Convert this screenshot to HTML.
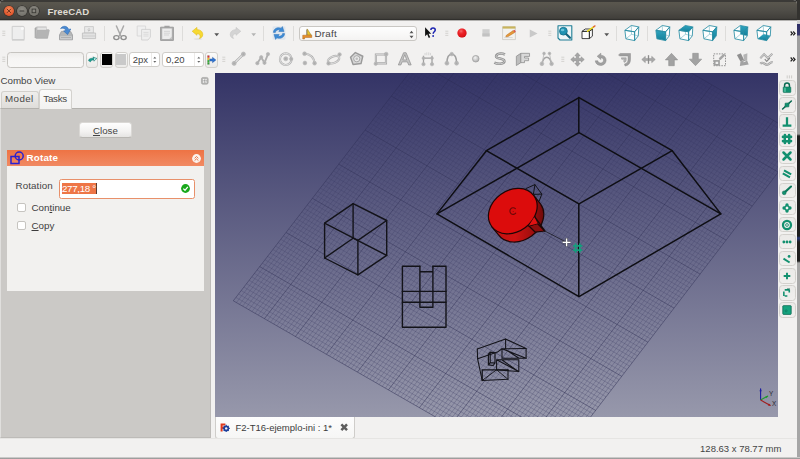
<!DOCTYPE html>
<html lang="en">
<head>
<meta charset="utf-8">
<title>FreeCAD</title>
<style>
*{box-sizing:border-box;margin:0;padding:0}
html,body{width:800px;height:459px;overflow:hidden;background:#2b2a28}
body{position:relative;font-family:"Liberation Sans",sans-serif;font-size:9.7px;color:#3c3c3c;line-height:1}
#win,#win *{position:absolute}
#win u{position:static}
#win svg *{position:static}
#win{position:absolute;left:0;top:0;width:797px;height:457px;background:#f2f1f0;overflow:hidden;border-radius:4px 4px 0 0}
#title{left:0;top:0;width:797px;height:21px;background:linear-gradient(#3b3a37 0,#3b3a37 1.5px,#5a574e 2.2px,#504e48 10px,#413f3b 18.4px,#302f2c 19.2px,#33322f 20px,#b3b2b0 20px,#b3b2b0 21px);border-radius:3px 3px 0 0}
#title .t{left:47.5px;top:6.7px;color:#dfdbd2;font-weight:bold;font-size:9.6px;letter-spacing:.1px}
.wb{width:9.8px;height:9.8px;border-radius:50%;top:6.4px}
#tb1{left:0;top:20px;width:797px;height:26px}
#tb2{left:0;top:46px;width:797px;height:27px}
#panel{left:0;top:73px;width:215px;height:365px}
#view{left:215px;top:73px;width:563px;height:344px;background:linear-gradient(#343466 0,#9798ab 100%);overflow:hidden}
#rtb{left:778px;top:73px;width:19px;height:344px}
#btab{left:215px;top:417px;width:582px;height:21px}
#status{left:0;top:438px;width:797px;height:20px;border-top:1px solid #e6e5e3}
svg{position:absolute;left:0;top:0;overflow:visible}
.cb{width:9px;height:9px;border:1px solid #c6c4c0;border-radius:2px;background:#fff}
.rb{left:1px;width:16.5px;height:15.5px;border-radius:3.5px}
.rb.on{border:1px solid #d3d1cd;background:linear-gradient(#ebeae8,#f0efed)}
.tbtn{border:1px solid #d2d0cc;border-radius:3px;background:linear-gradient(#fbfbfa,#ebeae8)}
.spin{border:1px solid #cfcdc9;border-radius:3px;background:#fff}

</style>
</head>
<body>
<div id="edge" style="position:absolute;left:797px;top:0;width:3px;height:459px;background:linear-gradient(#33322f 0,#33322f 20px,#cfcfcf 20.5px,#cfcfcf 24px,#2c2c66 24.5px,#3a3a6a 35px,#9e9e9e 36px,#9e9e9e 134px,#1e1e1e 136px,#1e1e1e 236px,#2a3a7a 238px,#1e1e1e 242px,#1e1e1e 261px,#a6a6a6 263px,#a6a6a6 459px)"></div>
<div id="bot" style="position:absolute;left:0;top:457px;width:800px;height:2px;background:linear-gradient(#e6e5e4,#a2a2a1 60%,#969695)"></div>
<div id="win" class="abs">
<div id="title"><div class="abs">
<div class="wb" style="left:4.4px;background:radial-gradient(circle at 50% 35%,#f28a5b,#e0542a 70%,#b8421f);box-shadow:0 0 0 .6px #3a2a22"><svg width="9.8" height="9.8" viewBox="0 0 10.5 10.5"><path d="M3.4 3.4L7.1 7.1M7.1 3.4L3.4 7.1" stroke="#6a2c16" stroke-width="1" stroke-linecap="round"/></svg></div>
<div class="wb" style="left:16.9px;background:radial-gradient(circle at 50% 35%,#8d8b84,#76746d 70%,#5c5a55);box-shadow:0 0 0 .6px #2c2b28"><svg width="9.8" height="9.8" viewBox="0 0 10.5 10.5"><path d="M3.1 5.3H7.4" stroke="#3c3b37" stroke-width="1.1" stroke-linecap="round"/></svg></div>
<div class="wb" style="left:29.4px;background:radial-gradient(circle at 50% 35%,#8d8b84,#76746d 70%,#5c5a55);box-shadow:0 0 0 .6px #2c2b28"><svg width="9.8" height="9.8" viewBox="0 0 10.5 10.5"><rect x="3.3" y="3.3" width="3.9" height="3.9" fill="none" stroke="#3c3b37" stroke-width="1"/></svg></div>
<span class="t">FreeCAD</span>
</div>
</div>
<div id="tb1" class="abs"><svg width="0" height="0" style="position:absolute"><defs><radialGradient id="recg" cx=".4" cy=".3" r=".7"><stop offset="0" stop-color="#ff8a8a" stop-opacity=".75"/><stop offset=".5" stop-color="#f04040" stop-opacity=".2"/><stop offset="1" stop-color="#a00000" stop-opacity=".35"/></radialGradient><radialGradient id="ndg" cx=".5" cy=".5" r=".6"><stop offset="0" stop-color="#a6a6a6"/><stop offset=".6" stop-color="#bcbcbc"/><stop offset="1" stop-color="#d8d8d8"/></radialGradient><linearGradient id="cbg" x1="0" y1="0" x2="0" y2="1"><stop offset="0" stop-color="#2fa4bf"/><stop offset="1" stop-color="#12809a"/></linearGradient><radialGradient id="ptg" cx=".4" cy=".35" r=".7"><stop offset="0" stop-color="#f4f4f4"/><stop offset="1" stop-color="#a8a8a8"/></radialGradient></defs></svg><svg style="left:2.0px;top:10.0px" width="4" height="7" viewBox="0 0 4 7"><path d="M.3 1.2H3.3M.3 3.3H3.3M.3 5.4H3.3" stroke="#d0cfcc" stroke-width=".9"/></svg>
<svg style="left:10.2px;top:5.3px" width="16" height="16" viewBox="0 0 16 16"><path d="M2.2 1.4H13.2Q14.2 1.4 14.2 2.4V14.6H2.2Z" fill="#eeeeee" stroke="#cbcbcb" stroke-width=".9"/><circle cx="12.3" cy="3.4" r="1.5" fill="#fafafa"/><path d="M2 15.2H14.4" stroke="#c9c9c9" stroke-width=".8"/></svg>
<svg style="left:34.2px;top:5.3px" width="16" height="16" viewBox="0 0 16 16"><path d="M1 2.5L3 1.6H12.6V4.2H15L13.6 13.4H1.6Z" fill="#bcbcbc"/><path d="M3.4 2.4H12.2V5H3.4Z" fill="#e4e4e4"/><path d="M2.2 13.2L3.6 5.2H15.4L13.6 13.2Z" fill="#b4b4b4" stroke="#acacac" stroke-width=".5"/><path d="M1.2 3V13" stroke="#9a9a9a" stroke-width=".9"/></svg>
<svg style="left:57.6px;top:5.3px" width="16" height="16" viewBox="0 0 16 16"><path d="M1.5 10L3.4 6.4H12.6L14.5 10V14.8H1.5Z" fill="#b4b6b7" stroke="#999b9d" stroke-width=".8"/><path d="M2.2 11.2H13.8V14.2H2.2Z" fill="#cfd0d1"/><path d="M3 12.6H13" stroke="#a0a2a3" stroke-width=".8"/><path d="M2.6 3.6C4.4 .4 9.4 .4 10.6 4.4L12.8 4L9.6 9.6L5.6 6L8 5.4C7 3.2 4.6 2.6 2.6 3.6Z" fill="#4a8ad2" stroke="#2f6cb4" stroke-width=".6"/></svg>
<svg style="left:81.2px;top:5.3px" width="16" height="16" viewBox="0 0 16 16"><path d="M3.6 1.6H12.4V8H3.6Z" fill="#e9e9e9" stroke="#c4c4c4" stroke-width=".8"/><path d="M8 3V6M6.6 4.8L8 6.2L9.4 4.8" stroke="#bdbdbd" stroke-width=".9" fill="none"/><path d="M1.4 8H14.6V13.6H1.4Z" fill="#e2e2e2" stroke="#bdbdbd" stroke-width=".8"/><path d="M2 11H14" stroke="#c8c8c8" stroke-width=".8"/></svg>
<div style="left:104.0px;top:5.8px;width:1px;height:15px;background:#dddcda"></div>
<svg style="left:112.0px;top:5.3px" width="16" height="16" viewBox="0 0 16 16"><path d="M4.4 1L8.6 10.5M11.6 1L7.4 10.5" stroke="#a9a9a9" stroke-width="1.5" stroke-linecap="round" fill="none"/><ellipse cx="4.4" cy="12.6" rx="2.6" ry="2" fill="none" stroke="#8f8f8f" stroke-width="1.4"/><ellipse cx="11.6" cy="12.6" rx="2.6" ry="2" fill="none" stroke="#8f8f8f" stroke-width="1.4"/></svg>
<svg style="left:135.6px;top:5.3px" width="16" height="16" viewBox="0 0 16 16"><path d="M1.2 1H9.6V11H1.2Z" fill="#f0f0f0" stroke="#d4d4d4" stroke-width=".8"/><path d="M5.6 4.4H14.4V12L12 15H5.6Z" fill="#efefef" stroke="#cdcdcd" stroke-width=".8"/><path d="M7.4 7.4H12.6M7.4 9.2H12.6M7.4 11H12.6" stroke="#d8d8d8" stroke-width=".9"/></svg>
<svg style="left:159.2px;top:5.3px" width="16" height="16" viewBox="0 0 16 16"><path d="M1.6 2.2H14.4V15.4H1.6Z" fill="#b1b1b1" stroke="#999" stroke-width=".9"/><path d="M3.2 3.6H12.8V14H3.2Z" fill="#ececec"/><path d="M5.4 .8H10.6V3H5.4Z" fill="#a2a2a2"/><path d="M5 6.4H11M5 8.2H11M5 10H10" stroke="#d2d2d2" stroke-width=".9"/><path d="M12.8 11.6V14H10.4Z" fill="#c2c2c2"/></svg>
<div style="left:182.0px;top:5.8px;width:1px;height:15px;background:#dddcda"></div>
<svg style="left:190.6px;top:5.9px" width="14" height="14" viewBox="0 0 16 16"><path d="M1.4 6L6.8 1.6V4.2C11 4.2 13.6 6.6 13.4 10.2C13.2 12.4 11.6 13.8 9.6 14.2C11.2 12.6 11 9.2 6.8 8.6V10.6Z" fill="#f7d932" stroke="#e2bd14" stroke-width=".7" stroke-linejoin="round"/><ellipse cx="8" cy="14.8" rx="5" ry=".9" fill="#000" opacity=".08"/></svg>
<svg style="left:213.8px;top:12.6px" width="5.4" height="3.4" viewBox="0 0 6 4"><path d="M.2 .3H5.8L3 3.7Z" fill="#555"/></svg>
<svg style="left:227.6px;top:5.9px" width="14" height="14" viewBox="0 0 16 16"><path d="M14.6 6L9.2 1.6V4.2C5 4.2 2.4 6.6 2.6 10.2C2.8 12.4 4.4 13.8 6.4 14.2C4.8 12.6 5 9.2 9.2 8.6V10.6Z" fill="#d4d4d4" stroke="#c6c6c6" stroke-width=".7" stroke-linejoin="round"/></svg>
<svg style="left:250.8px;top:12.6px" width="5.4" height="3.4" viewBox="0 0 6 4"><path d="M.2 .3H5.8L3 3.7Z" fill="#b4b4b4"/></svg>
<div style="left:262.7px;top:5.8px;width:1px;height:15px;background:#dddcda"></div>
<svg style="left:270.8px;top:5.3px" width="16" height="16" viewBox="0 0 16 16"><path d="M1.6 2.4Q1.6 1.2 2.8 1.2H13.2Q14.4 1.2 14.4 2.4V13.6Q14.4 14.8 13.2 14.8H2.8Q1.6 14.8 1.6 13.6Z" fill="#4f98dc" opacity=".12"/><path d="M2.4 7.4C2.6 3.8 6.4 1.6 10.2 3.2L11.4 1.6L13 6.6L7.8 6.4L9 4.8C6.6 4.4 4.6 5.4 4.4 7.4Z" fill="#3d8bd6" stroke="#2f73b8" stroke-width=".5"/><path d="M13.6 8.6C13.4 12.2 9.6 14.4 5.8 12.8L4.6 14.4L3 9.4L8.2 9.6L7 11.2C9.4 11.6 11.4 10.6 11.6 8.6Z" fill="#3d8bd6" stroke="#2f73b8" stroke-width=".5"/></svg>
<div style="left:293.1px;top:5.8px;width:1px;height:15px;background:#dddcda"></div>
<div id="wbsel" style="left:298.5px;top:5.5px;width:118.5px;height:15.5px;border:1px solid #c9c7c3;border-radius:3px;background:linear-gradient(#fefefe,#f4f3f2)"><svg style="left:2.5px;top:1.0px" width="12" height="12" viewBox="0 0 16 16"><path d="M7 1.2L12.4 9.6H7Z" fill="#e8c32c" stroke="#8a6d10" stroke-width=".6"/><path d="M6.2 2V10" stroke="#6c5a2a" stroke-width=".8"/><path d="M1 9.6H13V12.6H3.4V14.6H1Z" fill="#e8902c" stroke="#a65c12" stroke-width=".6"/></svg><span style="left:15px;top:2.6px;font-size:9.8px;letter-spacing:.25px;color:#444">Draft</span><svg style="left:109.5px;top:3.2px" width="5" height="9" viewBox="0 0 5 9"><path d="M.5 3.2L2.5 .8L4.5 3.2ZM.5 5.8L2.5 8.2L4.5 5.8Z" fill="#555"/></svg></div>
<svg style="left:422.6px;top:6.3px" width="14" height="14" viewBox="0 0 16 16"><path d="M2.4 1.4V11.6L4.8 9.4L6.6 13.6L8.2 12.8L6.4 8.8H9.4Z" fill="#111"/><path d="M9 4.6C9 1.6 14 1.6 14 4.6C14 6.6 11.6 6.6 11.6 8.8" fill="none" stroke="#1a22b0" stroke-width="1.7"/><circle cx="11.6" cy="11.4" r="1.05" fill="#1a22b0"/></svg>
<svg style="left:445.0px;top:10.0px" width="4" height="7" viewBox="0 0 4 7"><path d="M.3 1.2H3.3M.3 3.3H3.3M.3 5.4H3.3" stroke="#d0cfcc" stroke-width=".9"/></svg>
<svg style="left:453.7px;top:5.1px" width="16" height="16" viewBox="0 0 16 16"><circle cx="8" cy="8" r="4.6" fill="#e8161c"/><circle cx="8" cy="8" r="4.6" fill="url(#recg)"/></svg>
<svg style="left:477.6px;top:5.3px" width="16" height="16" viewBox="0 0 16 16"><rect x="4.4" y="4.2" width="7.2" height="7.2" fill="#cfcfcf"/><rect x="4.4" y="8.4" width="7.2" height="3" fill="#c2c2c2"/></svg>
<svg style="left:501.4px;top:5.3px" width="16" height="16" viewBox="0 0 16 16"><path d="M1.6 1.8H14.4V14.6H1.6Z" fill="#f3f2ee" stroke="#c9c8c2" stroke-width=".8"/><path d="M1.6 1.4H14.4V3.6H1.6Z" fill="#c9b45c"/><path d="M3.2 12.6H11.6" stroke="#cfcfcf" stroke-width=".8"/><path d="M5.4 10.2L12.2 5.6L13.8 7.4L7 11.6L4.8 11.8Z" fill="#e79a3a" stroke="#b56a1a" stroke-width=".5"/><path d="M12.2 5.6L13.4 4.8L14.8 6.4L13.8 7.4Z" fill="#e0504a"/></svg>
<svg style="left:526.5px;top:7.0px" width="13" height="13" viewBox="0 0 16 16"><path d="M3.4 3.2L13 8L3.4 12.8Z" fill="#c9c9c9"/></svg>
<svg style="left:548.0px;top:10.0px" width="4" height="7" viewBox="0 0 4 7"><path d="M.3 1.2H3.3M.3 3.3H3.3M.3 5.4H3.3" stroke="#d0cfcc" stroke-width=".9"/></svg>
<svg style="left:556.6px;top:5.3px" width="16" height="16" viewBox="0 0 16 16"><path d="M1 .8H14.8V15H3L1 13Z" fill="#eef6f8" stroke="#217f96" stroke-width="1.1" stroke-linejoin="round"/><circle cx="6.4" cy="6.2" r="3.9" fill="#1f93b3" stroke="#16708c" stroke-width=".8"/><path d="M9.4 9.2L13 12.8" stroke="#15657e" stroke-width="2.2" stroke-linecap="round"/><ellipse cx="5.6" cy="5" rx="1.8" ry="1.2" fill="#7fd0e4" opacity=".8"/></svg>
<svg style="left:580.0px;top:4.9px" width="16" height="16" viewBox="0 0 16 16"><path d="M2 6.4L5.2 4H12.4L9.4 6.4Z M2 6.4H9.4V13.6H2Z M9.4 6.4L12.4 4V11.2L9.4 13.6Z" fill="#fbfbfb" stroke="#2e2e2e" stroke-width=".9" stroke-linejoin="round"/><path d="M7.6 6.2L14 1.6" stroke="#e8d81a" stroke-width="1.5" stroke-linecap="round"/><path d="M13.4 2L15 .9" stroke="#e0603a" stroke-width="1.3" stroke-linecap="round"/></svg>
<svg style="left:604.3px;top:12.6px" width="5.4" height="3.4" viewBox="0 0 6 4"><path d="M.2 .3H5.8L3 3.7Z" fill="#555"/></svg>
<div style="left:615.7px;top:5.8px;width:1px;height:15px;background:#dddcda"></div>
<svg style="left:624.2px;top:5.3px" width="16" height="16" viewBox="0 0 16 16"><path d="M0.9 5.3L7.3 0.5L14.8 1.9L14.3 10.8L10.6 15.6L1.9 13.8Z" fill="#fdfefe" stroke="none"/><path d="M7.3 0.5L7.5 9.3M7.5 9.3L1.9 13.8M7.5 9.3L14.3 10.8" fill="none" stroke="#2a8ea4" stroke-opacity=".55" stroke-width=".7" stroke-linejoin="round"/><path d="M0.9 5.3L10.6 6.8L10.6 15.6L1.9 13.8ZM0.9 5.3L7.3 0.5L14.8 1.9L10.6 6.8ZM10.6 6.8L14.8 1.9L14.3 10.8L10.6 15.6Z" fill="none" stroke="#2a8ea4" stroke-width=".85" stroke-linejoin="round"/></svg>
<div style="left:647.1px;top:5.8px;width:1px;height:15px;background:#dddcda"></div>
<svg style="left:654.8px;top:5.3px" width="16" height="16" viewBox="0 0 16 16"><path d="M0.9 5.3L7.3 0.5L14.8 1.9L14.3 10.8L10.6 15.6L1.9 13.8Z" fill="#fdfefe" stroke="none"/><path d="M0.9 5.3L10.6 6.8L10.6 15.6L1.9 13.8Z" fill="url(#cbg)" stroke="none"/><path d="M7.3 0.5L7.5 9.3M7.5 9.3L1.9 13.8M7.5 9.3L14.3 10.8" fill="none" stroke="#2a8ea4" stroke-opacity=".55" stroke-width=".7" stroke-linejoin="round"/><path d="M0.9 5.3L10.6 6.8L10.6 15.6L1.9 13.8ZM0.9 5.3L7.3 0.5L14.8 1.9L10.6 6.8ZM10.6 6.8L14.8 1.9L14.3 10.8L10.6 15.6Z" fill="none" stroke="#2a8ea4" stroke-width=".85" stroke-linejoin="round"/></svg>
<svg style="left:678.2px;top:5.3px" width="16" height="16" viewBox="0 0 16 16"><path d="M0.9 5.3L7.3 0.5L14.8 1.9L14.3 10.8L10.6 15.6L1.9 13.8Z" fill="#fdfefe" stroke="none"/><path d="M0.9 5.3L7.3 0.5L14.8 1.9L10.6 6.8Z" fill="url(#cbg)" stroke="none"/><path d="M7.3 0.5L7.5 9.3M7.5 9.3L1.9 13.8M7.5 9.3L14.3 10.8" fill="none" stroke="#2a8ea4" stroke-opacity=".55" stroke-width=".7" stroke-linejoin="round"/><path d="M0.9 5.3L10.6 6.8L10.6 15.6L1.9 13.8ZM0.9 5.3L7.3 0.5L14.8 1.9L10.6 6.8ZM10.6 6.8L14.8 1.9L14.3 10.8L10.6 15.6Z" fill="none" stroke="#2a8ea4" stroke-width=".85" stroke-linejoin="round"/></svg>
<svg style="left:702.0px;top:5.3px" width="16" height="16" viewBox="0 0 16 16"><path d="M0.9 5.3L7.3 0.5L14.8 1.9L14.3 10.8L10.6 15.6L1.9 13.8Z" fill="#fdfefe" stroke="none"/><path d="M10.6 6.8L14.8 1.9L14.3 10.8L10.6 15.6Z" fill="url(#cbg)" stroke="none"/><path d="M7.3 0.5L7.5 9.3M7.5 9.3L1.9 13.8M7.5 9.3L14.3 10.8" fill="none" stroke="#2a8ea4" stroke-opacity=".55" stroke-width=".7" stroke-linejoin="round"/><path d="M0.9 5.3L10.6 6.8L10.6 15.6L1.9 13.8ZM0.9 5.3L7.3 0.5L14.8 1.9L10.6 6.8ZM10.6 6.8L14.8 1.9L14.3 10.8L10.6 15.6Z" fill="none" stroke="#2a8ea4" stroke-width=".85" stroke-linejoin="round"/></svg>
<div style="left:724.9px;top:5.8px;width:1px;height:15px;background:#dddcda"></div>
<svg style="left:732.6px;top:5.3px" width="16" height="16" viewBox="0 0 16 16"><path d="M0.9 5.3L7.3 0.5L14.8 1.9L14.3 10.8L10.6 15.6L1.9 13.8Z" fill="#fdfefe" stroke="none"/><path d="M7.3 0.5L14.8 1.9L14.3 10.8L7.5 9.3Z" fill="url(#cbg)" stroke="none"/><path d="M7.3 0.5L7.5 9.3M7.5 9.3L1.9 13.8M7.5 9.3L14.3 10.8" fill="none" stroke="#2a8ea4" stroke-opacity=".55" stroke-width=".7" stroke-linejoin="round"/><path d="M0.9 5.3L10.6 6.8L10.6 15.6L1.9 13.8ZM0.9 5.3L7.3 0.5L14.8 1.9L10.6 6.8ZM10.6 6.8L14.8 1.9L14.3 10.8L10.6 15.6Z" fill="none" stroke="#2a8ea4" stroke-width=".85" stroke-linejoin="round"/></svg>
<svg style="left:756.4px;top:5.3px" width="16" height="16" viewBox="0 0 16 16"><path d="M0.9 5.3L7.3 0.5L14.8 1.9L14.3 10.8L10.6 15.6L1.9 13.8Z" fill="#fdfefe" stroke="none"/><path d="M1.9 13.8L10.6 15.6L14.3 10.8L7.5 9.3Z" fill="url(#cbg)" stroke="none"/><path d="M7.3 0.5L7.5 9.3M7.5 9.3L1.9 13.8M7.5 9.3L14.3 10.8" fill="none" stroke="#2a8ea4" stroke-opacity=".55" stroke-width=".7" stroke-linejoin="round"/><path d="M0.9 5.3L10.6 6.8L10.6 15.6L1.9 13.8ZM0.9 5.3L7.3 0.5L14.8 1.9L10.6 6.8ZM10.6 6.8L14.8 1.9L14.3 10.8L10.6 15.6Z" fill="none" stroke="#2a8ea4" stroke-width=".85" stroke-linejoin="round"/></svg>
<svg style="left:789.6px;top:10.9px" width="5.6" height="4.8" viewBox="0 0 7 6"><path d="M.8 .6L3 3L.8 5.4M4 .6L6.2 3L4 5.4" fill="none" stroke="#222" stroke-width="1.6"/></svg></div>
<div id="tb2" class="abs"><svg style="left:2.0px;top:10.2px" width="4" height="7" viewBox="0 0 4 7"><path d="M.3 1.2H3.3M.3 3.3H3.3M.3 5.4H3.3" stroke="#d0cfcc" stroke-width=".9"/></svg>
<div style="left:7.4px;top:5.6px;width:77px;height:16px;border:1px solid #c6c4c0;border-radius:3.5px;background:linear-gradient(#eeedeb,#f6f5f4 40%,#f8f7f6)"></div>
<div class="tbtn" style="left:86.4px;top:5.6px;width:12px;height:16px"></div>
<svg style="left:87.1px;top:7.7px" width="11" height="11" viewBox="0 0 16 16"><path d="M2 9.6C3 6.4 6 5.6 9 6.6L8.6 4.2L14.4 6.4L10 10.6L9.8 8.6C7.4 8.4 5.6 9.6 5 11.6Z" fill="#1b9c90" stroke="#0f6f66" stroke-width=".6"/><path d="M10 6.2L13.4 6.6L10.6 9.4Z" fill="#e8f6f2"/></svg>
<div class="tbtn" style="left:100.4px;top:5.6px;width:12.5px;height:16px"><div style="left:.8px;top:1.6px;width:9.6px;height:10.6px;background:#000"></div></div>
<div class="tbtn" style="left:114.6px;top:5.6px;width:13px;height:16px"><div style="left:.8px;top:1.6px;width:9.6px;height:10.6px;background:#c9c9c9"></div></div>
<div class="spin" style="left:129px;top:6px;width:31px;height:15px"><span style="left:2.8px;top:2px;font-size:9.5px;color:#444">2px</span><div style="left:20.5px;top:0;width:1px;height:13px;background:#eceae8"></div><svg style="left:auto;right:2.2px;top:3px" width="3.6" height="7.4" viewBox="0 0 4 8"><path d="M.3 2.6L2 .6L3.7 2.6ZM.3 5.4L2 7.4L3.7 5.4Z" fill="#666"/></svg></div>
<div class="spin" style="left:162px;top:6px;width:41.5px;height:15px"><span style="left:3px;top:2px;font-size:9.5px;color:#444">0,20</span><div style="left:31px;top:0;width:1px;height:13px;background:#eceae8"></div><svg style="left:auto;right:2.2px;top:3px" width="3.6" height="7.4" viewBox="0 0 4 8"><path d="M.3 2.6L2 .6L3.7 2.6ZM.3 5.4L2 7.4L3.7 5.4Z" fill="#666"/></svg></div>
<div class="tbtn" style="left:204.5px;top:5.6px;width:13px;height:16px"></div>
<svg style="left:205.0px;top:7.5px" width="12" height="12" viewBox="0 0 16 16"><rect x="3" y="1.6" width="3" height="12.8" fill="#b8b8b8"/><rect x="3.4" y="2.2" width="2.4" height="2.6" fill="#e03030"/><rect x="3.4" y="5.2" width="2.4" height="2.6" fill="#f0c020"/><rect x="3.4" y="8.2" width="2.4" height="2.6" fill="#30b030"/><rect x="3.4" y="11.2" width="2.4" height="2.6" fill="#30a030"/><path d="M6.4 6.6H10V4.4L14.6 8L10 11.6V9.4H6.4Z" fill="#2f74d0" stroke="#1d4f9c" stroke-width=".5"/></svg>
<svg style="left:222.0px;top:10.2px" width="4" height="7" viewBox="0 0 4 7"><path d="M.3 1.2H3.3M.3 3.3H3.3M.3 5.4H3.3" stroke="#d0cfcc" stroke-width=".9"/></svg>
<svg style="left:230.8px;top:5.4px" width="15.5" height="15.5" viewBox="0 0 16 16"><path d="M3.4 12.6L12.6 3.4" stroke="#ababab" stroke-width="2.6" stroke-linecap="round"/><path d="M3.4 12.6L12.6 3.4" stroke="#e0e0e0" stroke-width="1.3" stroke-linecap="round"/><circle cx="3.2" cy="12.8" r="2.15" fill="url(#ndg)" stroke="#a4a4a4" stroke-width=".5"/><circle cx="12.8" cy="3.2" r="2.15" fill="url(#ndg)" stroke="#a4a4a4" stroke-width=".5"/></svg>
<svg style="left:254.6px;top:5.4px" width="15.5" height="15.5" viewBox="0 0 16 16"><path d="M2.4 12.6L6.4 6.4L9.8 12.2L13.4 3.2" stroke="#b0b0b0" stroke-width="1.9" fill="none"/><circle cx="2.4" cy="12.6" r="1.75" fill="url(#ndg)" stroke="#a4a4a4" stroke-width=".5"/><circle cx="6.4" cy="6.4" r="1.75" fill="url(#ndg)" stroke="#a4a4a4" stroke-width=".5"/><circle cx="9.8" cy="12.2" r="1.75" fill="url(#ndg)" stroke="#a4a4a4" stroke-width=".5"/><circle cx="13.4" cy="3.2" r="1.75" fill="url(#ndg)" stroke="#a4a4a4" stroke-width=".5"/></svg>
<svg style="left:278.2px;top:5.4px" width="15.5" height="15.5" viewBox="0 0 16 16"><circle cx="8" cy="8.4" r="6" fill="none" stroke="#b0b0b0" stroke-width="2.2"/><circle cx="8" cy="8.4" r="6" fill="none" stroke="#e2e2e2" stroke-width="1"/><circle cx="8" cy="8" r="2.15" fill="url(#ndg)" stroke="#a4a4a4" stroke-width=".5"/><circle cx="13.6" cy="8.2" r="1.75" fill="url(#ndg)" stroke="#a4a4a4" stroke-width=".5"/></svg>
<svg style="left:301.9px;top:5.4px" width="15.5" height="15.5" viewBox="0 0 16 16"><path d="M3 2.6C8.6 3.4 12.4 7 13 12.6" stroke="#b0b0b0" stroke-width="2.2" fill="none"/><path d="M3 2.6C8.6 3.4 12.4 7 13 12.6" stroke="#e0e0e0" stroke-width="1" fill="none"/><circle cx="2.6" cy="2.8" r="1.95" fill="url(#ndg)" stroke="#a4a4a4" stroke-width=".5"/><circle cx="13" cy="12.6" r="1.95" fill="url(#ndg)" stroke="#a4a4a4" stroke-width=".5"/><circle cx="3" cy="12.4" r="1.95" fill="url(#ndg)" stroke="#a4a4a4" stroke-width=".5"/></svg>
<svg style="left:325.6px;top:5.4px" width="15.5" height="15.5" viewBox="0 0 16 16"><ellipse cx="7.8" cy="9" rx="6.2" ry="3.4" transform="rotate(-22 7.8 9)" fill="none" stroke="#b0b0b0" stroke-width="2.2"/><ellipse cx="7.8" cy="9" rx="6.2" ry="3.4" transform="rotate(-22 7.8 9)" fill="none" stroke="#e0e0e0" stroke-width="1"/><circle cx="2.6" cy="12.8" r="1.85" fill="url(#ndg)" stroke="#a4a4a4" stroke-width=".5"/><circle cx="14" cy="3.6" r="1.85" fill="url(#ndg)" stroke="#a4a4a4" stroke-width=".5"/></svg>
<svg style="left:349.4px;top:5.4px" width="15.5" height="15.5" viewBox="0 0 16 16"><path d="M6.6 1.6L14.2 5.4L12.4 13L4.2 14L1.6 6.4Z" fill="#d8d8d8" stroke="#9a9a9a" stroke-width="1.5" stroke-linejoin="round"/><circle cx="8" cy="8" r="3.2" fill="#e9e9e9" stroke="#a6a6a6" stroke-width="1"/><circle cx="8" cy="8" r="1.3" fill="#bdbdbd"/></svg>
<svg style="left:373.0px;top:5.4px" width="15.5" height="15.5" viewBox="0 0 16 16"><path d="M3 3.6H13.4V12.8H3Z" fill="none" stroke="#a6a6a6" stroke-width="2.2"/><path d="M3 3.6H13.4V12.8H3Z" fill="none" stroke="#d8d8d8" stroke-width=".9"/><circle cx="13.6" cy="3.2" r="1.95" fill="url(#ndg)" stroke="#a4a4a4" stroke-width=".5"/><circle cx="2.8" cy="13.2" r="1.75" fill="url(#ndg)" stroke="#a4a4a4" stroke-width=".5"/></svg>
<svg style="left:396.8px;top:5.4px" width="15.5" height="15.5" viewBox="0 0 16 16"><path d="M1.4 14.4L6.8 1.8H9.4L14.6 14.4H12L10.8 11.2H5.2L4 14.4ZM6 9.2H10L8 3.8Z" fill="#c4c4c4" stroke="#949494" stroke-width=".8" fill-rule="evenodd" stroke-linejoin="round"/></svg>
<svg style="left:420.4px;top:5.4px" width="15.5" height="15.5" viewBox="0 0 16 16"><path d="M3.6 5V14M12.4 5V14M3.6 7.4H12.4" stroke="#a0a0a0" stroke-width="1.3" fill="none"/><path d="M5.2 2V4.4M7 1.4V4.4M9 1.4V4.4M10.8 2V4.4" stroke="#d2d2d2" stroke-width=".9"/><circle cx="3.6" cy="13.6" r="1.75" fill="url(#ndg)" stroke="#a4a4a4" stroke-width=".5"/><circle cx="12.4" cy="13.6" r="1.75" fill="url(#ndg)" stroke="#a4a4a4" stroke-width=".5"/><circle cx="3.6" cy="7.4" r="1.45" fill="url(#ndg)" stroke="#a4a4a4" stroke-width=".5"/><circle cx="12.4" cy="7.4" r="1.45" fill="url(#ndg)" stroke="#a4a4a4" stroke-width=".5"/></svg>
<svg style="left:444.1px;top:5.4px" width="15.5" height="15.5" viewBox="0 0 16 16"><path d="M3 13C3 6 5.4 3.4 8 3.4C10.6 3.4 13 6 13 13" stroke="#a0a0a0" stroke-width="1.7" fill="none"/><circle cx="3" cy="12.6" r="2.05" fill="url(#ndg)" stroke="#a4a4a4" stroke-width=".5"/><circle cx="13" cy="12.6" r="2.05" fill="url(#ndg)" stroke="#a4a4a4" stroke-width=".5"/><circle cx="8" cy="3.2" r="1.85" fill="url(#ndg)" stroke="#a4a4a4" stroke-width=".5"/></svg>
<svg style="left:467.9px;top:5.4px" width="15.5" height="15.5" viewBox="0 0 16 16"><circle cx="8" cy="8" r="3.4" fill="url(#ptg)" stroke="#a0a0a0" stroke-width=".8"/></svg>
<svg style="left:491.5px;top:5.4px" width="15.5" height="15.5" viewBox="0 0 16 16"><path d="M13.4 3.6C9.4 1.8 4.2 2.8 4.2 5.6C4.2 8.6 12.8 7 12.8 10.6C12.8 13.6 6 14 2.4 12" stroke="#8f8f8f" stroke-width="2.6" fill="none"/><path d="M13.4 3.6C9.4 1.8 4.2 2.8 4.2 5.6C4.2 8.6 12.8 7 12.8 10.6C12.8 13.6 6 14 2.4 12" stroke="#d4d4d4" stroke-width="1" fill="none"/></svg>
<svg style="left:515.2px;top:5.4px" width="15.5" height="15.5" viewBox="0 0 16 16"><path d="M1.4 5.4L6 2.4V12L1.4 15Z" fill="#bdbdbd" stroke="#8f8f8f" stroke-width=".8"/><path d="M6 2.4H15V5.6H9.8V7.2H14V10H9.8V12H6Z" fill="#d9d9d9" stroke="#8f8f8f" stroke-width=".8" stroke-linejoin="round"/></svg>
<svg style="left:538.9px;top:5.4px" width="15.5" height="15.5" viewBox="0 0 16 16"><path d="M3 13.4C5 4 11 4 13 13.4" stroke="#a4a4a4" stroke-width="1.5" fill="none"/><path d="M3 13.4L5.2 2.6M13 13.4L10.8 2.6" stroke="#bcbcbc" stroke-width=".9"/><circle cx="3" cy="13.2" r="1.95" fill="url(#ndg)" stroke="#a4a4a4" stroke-width=".5"/><circle cx="13" cy="13.2" r="1.95" fill="url(#ndg)" stroke="#a4a4a4" stroke-width=".5"/><circle cx="5.2" cy="2.6" r="1.45" fill="url(#ndg)" stroke="#a4a4a4" stroke-width=".5"/><circle cx="10.8" cy="2.6" r="1.45" fill="url(#ndg)" stroke="#a4a4a4" stroke-width=".5"/></svg>
<svg style="left:560.5px;top:10.2px" width="4" height="7" viewBox="0 0 4 7"><path d="M.3 1.2H3.3M.3 3.3H3.3M.3 5.4H3.3" stroke="#d0cfcc" stroke-width=".9"/></svg>
<svg style="left:569.7px;top:5.8px" width="15" height="15" viewBox="0 0 16 16"><path d="M8 .8L10.8 4H9.2V6.8H12V5.2L15.2 8L12 10.8V9.2H9.2V12H10.8L8 15.2L5.2 12H6.8V9.2H4V10.8L.8 8L4 5.2V6.8H6.8V4H5.2Z" fill="#a6a6a6" stroke="#8c8c8c" stroke-width=".6" stroke-linejoin="round"/></svg>
<svg style="left:593.4px;top:5.8px" width="15" height="15" viewBox="0 0 16 16"><path d="M8.4 3.4C12 3.6 14 6 14 8.8C14 12 11.4 14.4 8.2 14.4C5 14.4 2.6 12.2 2.4 9.4H5.2C5.4 10.8 6.6 11.8 8.2 11.8C9.8 11.8 11.2 10.6 11.2 8.8C11.2 7.2 10 6.2 8.4 6V8L4.4 4.6L8.4 1.2Z" fill="#a0a0a0" stroke="#8a8a8a" stroke-width=".5" stroke-linejoin="round"/></svg>
<svg style="left:617.0px;top:5.8px" width="15" height="15" viewBox="0 0 16 16"><path d="M1.6 3.2L3.4 1.6H14.4V8C14.4 12 12 14.6 8.6 15L8 12.8C10.6 12.2 11.8 10.6 11.8 8V4.2H3Z" fill="#9e9e9e" stroke="#8a8a8a" stroke-width=".5"/><path d="M4.6 6.2H9.8V8.4C9.8 9.8 9 10.8 7.6 11L7 9.2C7.8 9 8 8.6 8 8V7.8H5Z" fill="#b4b4b4" stroke="#8f8f8f" stroke-width=".5"/></svg>
<svg style="left:640.7px;top:5.8px" width="15" height="15" viewBox="0 0 16 16"><path d="M.8 8L4.6 4.6V6.9H11.4V4.6L15.2 8L11.4 11.4V9.1H4.6V11.4Z" fill="#a8a8a8" stroke="#8f8f8f" stroke-width=".5"/><path d="M8 3.4V12.6" stroke="#8c8c8c" stroke-width="1.4"/></svg>
<svg style="left:664.3px;top:5.8px" width="15" height="15" viewBox="0 0 16 16"><path d="M8 1.4L14.6 8.4H11V14.6H5V8.4H1.4Z" fill="#a2a2a2" stroke="#8c8c8c" stroke-width=".6" stroke-linejoin="round"/></svg>
<svg style="left:688.0px;top:5.8px" width="15" height="15" viewBox="0 0 16 16"><path d="M8 14.6L14.6 7.6H11V1.4H5V7.6H1.4Z" fill="#a2a2a2" stroke="#8c8c8c" stroke-width=".6" stroke-linejoin="round"/></svg>
<svg style="left:711.6px;top:5.8px" width="15" height="15" viewBox="0 0 16 16"><path d="M1.8 2H14.4V14.6H1.8Z" fill="none" stroke="#8c8c8c" stroke-width="1" stroke-dasharray="1.6 1.2"/><path d="M2 8.6H8.4V14.6H2Z" fill="#a0a0a0"/><path d="M3.8 10.4H6.6V12.8H3.8Z" fill="#f0f0f0"/><path d="M8.6 7.2L12.6 3.4" stroke="#a6a6a6" stroke-width="2.6" stroke-linecap="round"/></svg>
<svg style="left:735.2px;top:5.8px" width="15" height="15" viewBox="0 0 16 16"><path d="M2 3.2L6.2 1.2L9.6 8.2L5.8 10.2Z" fill="#8f8f8f"/><path d="M8.8 3L13.2 1.4L13 9.4L9.6 8.2Z" fill="#b4b4b4"/><path d="M5.8 10.2L9.6 8.2L13 9.4L14.6 13.4L5.2 14.8Z" fill="#a2a2a2"/><path d="M9 10.4L11.4 9.8" stroke="#e8e8e8" stroke-width="1"/></svg>
<svg style="left:758.9px;top:5.8px" width="15" height="15" viewBox="0 0 16 16"><path d="M1.4 6.6L5.4 2.4L9.4 6.4L14.2 1.8" stroke="#a6a6a6" stroke-width="2.2" fill="none"/><path d="M1.4 6.6L5.4 2.4L9.4 6.4L14.2 1.8" stroke="#e2e2e2" stroke-width=".8" fill="none"/><path d="M1.4 12.6C4.4 9.2 6.4 14.4 9 13.6C11.4 12.8 12 10.4 14.6 10.8" stroke="#a0a0a0" stroke-width="2.4" fill="none"/><path d="M1.4 12.6C4.4 9.2 6.4 14.4 9 13.6C11.4 12.8 12 10.4 14.6 10.8" stroke="#dedede" stroke-width=".8" fill="none"/><path d="M6.2 7.6L8.2 10L11.6 6.4" stroke="#8a8a8a" stroke-width="1.3" fill="none"/></svg>
<svg style="left:789.6px;top:11.1px" width="5.6" height="4.8" viewBox="0 0 7 6"><path d="M.8 .6L3 3L.8 5.4M4 .6L6.2 3L4 5.4" fill="none" stroke="#222" stroke-width="1.6"/></svg></div>
<div id="panel" class="abs"><span style="left:.5px;top:3.4px;font-size:9.8px;letter-spacing:-.05px;color:#444">Combo View</span>
<svg style="left:201.4px;top:3.8px" width="7.6" height="7.6" viewBox="0 0 7 7"><rect x=".4" y=".4" width="6.2" height="6.2" rx="1.4" fill="#b4b4b3" stroke="#a2a2a1" stroke-width=".6"/><path d="M1.9 1.9L5.1 5.1M5.1 1.9L1.9 5.1" stroke="#f4f4f3" stroke-width="1.1"/><circle cx="3.5" cy="3.5" r=".8" fill="#9a9a99"/></svg>
<div id="pbody" class="abs" style="left:0;top:34.9px;width:210.5px;height:329.8px;background:#cbc9c6;border-left:1px solid #e0dfdd;border-top:1px solid #b4b2ae;border-bottom:1px solid #bdbbb8;border-right:1px solid #bdbbb8"></div>
<div class="tab" style="left:.5px;top:17.9px;width:38.5px;height:17.5px;background:linear-gradient(#efeeec,#dfddda);border:1px solid #d2d0cc;border-bottom:none;border-radius:3px 3px 0 0"><span style="left:3.6px;top:2.4px;font-size:9.8px;letter-spacing:.35px;color:#474747">Model</span></div>
<div class="tab" style="left:38.7px;top:15.8px;width:33px;height:20px;background:linear-gradient(#fbfbfa,#f2f1f0);border:1px solid #d4d2ce;border-bottom:none;border-radius:3px 3px 0 0"><span style="left:3.6px;top:3.8px;font-size:9.8px;letter-spacing:-.3px;color:#474747">Tasks</span></div>
<div id="closeb" style="left:79px;top:49px;width:53px;height:16px;border:1px solid #dad8d5;border-bottom-color:#b9b7b3;border-radius:3.5px;background:linear-gradient(#fefefe,#f3f2f1 60%,#e6e5e3)"><span style="left:13px;top:3px;font-size:9.7px;color:#444"><u>C</u>lose</span></div>
<div id="ohead" style="left:6.5px;top:77px;width:197.5px;height:16px;background:linear-gradient(#ee7344,#f18a63)">
<svg style="left:3px;top:1px" width="15" height="14" viewBox="0 0 15 14"><rect x="1" y="5.5" width="8" height="7" fill="none" stroke="#2a1fd0" stroke-width="1.5"/><circle cx="9.2" cy="5" r="4" fill="none" stroke="#2a1fd0" stroke-width="1.5"/></svg>
<span style="left:20px;top:3px;font-size:9.8px;font-weight:bold;color:#fff;letter-spacing:.2px">Rotate</span>
<svg style="left:185.5px;top:4px" width="9" height="9" viewBox="0 0 9 9"><circle cx="4.5" cy="4.5" r="4.4" fill="#fbf3ee"/><path d="M2.6 4.3L4.5 2.5L6.4 4.3M2.6 6.6L4.5 4.8L6.4 6.6" fill="none" stroke="#e8693a" stroke-width=".9"/></svg>
</div>
<div id="obody" style="left:6.5px;top:93px;width:197.5px;height:124.5px;background:#f2f1ef"></div>
<span style="left:15.5px;top:107.5px;font-size:9.8px;letter-spacing:.1px;color:#444">Rotation</span>
<div id="rin" style="left:59px;top:105.5px;width:135.5px;height:20px;border:1px solid #e8906a;border-bottom-width:1.5px;border-radius:2.5px;background:#fff">
<span style="left:2px;top:3.5px;height:11px;width:35px;background:#ee7546;color:#fff;font-size:9.8px;letter-spacing:-.35px;padding:1px 0 0 0;white-space:pre;border-right:1px solid #5a3a30">277,18 °</span>
<svg style="left:121px;top:4.4px" width="9" height="9" viewBox="0 0 9 9"><circle cx="4.5" cy="4.5" r="4.4" fill="#18a81c"/><path d="M2.3 4.6L4 6.3L6.8 2.8" fill="none" stroke="#fff" stroke-width="1.3"/></svg>
</div>
<div class="cb" style="left:17px;top:130px"></div><span style="left:31.5px;top:130px;font-size:9.8px">Con<u>t</u>inue</span>
<div class="cb" style="left:17px;top:148px"></div><span style="left:31.5px;top:148px;font-size:9.8px"><u>C</u>opy</span>
</div>
<div id="view"><svg width="563" height="344" viewBox="0 0 563 344">
<g style="filter:blur(.45px)"><defs><linearGradient id="gmin" gradientUnits="userSpaceOnUse" x1="0" y1="0" x2="0" y2="344"><stop offset="0" stop-color="#2c2c56" stop-opacity=".24"/><stop offset="1" stop-color="#2c2c56" stop-opacity=".42"/></linearGradient><linearGradient id="gmaj" gradientUnits="userSpaceOnUse" x1="0" y1="0" x2="0" y2="344"><stop offset="0" stop-color="#26264c" stop-opacity=".42"/><stop offset="1" stop-color="#26264c" stop-opacity=".6"/></linearGradient></defs>
<path d="M21.4 229.6L284.3 -111.0M20.9 224.4L330.8 402.4M24.5 231.4L287.4 -109.3M23.6 221.0L333.4 398.9M27.6 233.2L290.5 -107.5M26.2 217.6L336.1 395.5M30.7 235.0L293.6 -105.7M28.9 214.1L338.7 392.1M33.8 236.7L296.7 -103.9M31.5 210.7L341.3 388.7M36.9 238.5L299.8 -102.1M34.1 207.3L343.9 385.3M40.0 240.3L302.9 -100.3M36.8 203.9L346.5 381.8M43.2 242.1L305.9 -98.5M39.4 200.5L349.2 378.4M46.3 243.9L309.0 -96.8M42.1 197.0L351.8 375.0M52.5 247.4L315.2 -93.2M47.3 190.2L357.0 368.2M55.6 249.2L318.3 -91.4M50.0 186.8L359.6 364.8M58.7 251.0L321.4 -89.6M52.6 183.4L362.3 361.3M61.8 252.8L324.4 -87.8M55.3 180.0L364.9 357.9M64.9 254.6L327.5 -86.1M57.9 176.5L367.5 354.5M68.0 256.4L330.6 -84.3M60.5 173.1L370.1 351.1M71.1 258.1L333.7 -82.5M63.2 169.7L372.7 347.7M74.2 259.9L336.8 -80.7M65.8 166.3L375.3 344.3M77.3 261.7L339.9 -78.9M68.4 162.9L378.0 340.8M83.5 265.3L346.0 -75.4M73.7 156.0L383.2 334.0M86.6 267.0L349.1 -73.6M76.3 152.6L385.8 330.6M89.7 268.8L352.2 -71.8M79.0 149.2L388.4 327.2M92.8 270.6L355.3 -70.0M81.6 145.8L391.0 323.8M95.9 272.4L358.4 -68.2M84.3 142.4L393.7 320.4M99.0 274.2L361.5 -66.5M86.9 139.0L396.3 316.9M102.1 276.0L364.5 -64.7M89.5 135.6L398.9 313.5M105.2 277.7L367.6 -62.9M92.2 132.1L401.5 310.1M108.3 279.5L370.7 -61.1M94.8 128.7L404.1 306.7M114.5 283.1L376.9 -57.5M100.1 121.9L409.3 299.9M117.6 284.9L379.9 -55.8M102.7 118.5L412.0 296.5M120.7 286.6L383.0 -54.0M105.3 115.1L414.6 293.1M123.8 288.4L386.1 -52.2M108.0 111.7L417.2 289.6M126.9 290.2L389.2 -50.4M110.6 108.3L419.8 286.2M130.0 292.0L392.3 -48.6M113.2 104.9L422.4 282.8M133.1 293.8L395.4 -46.9M115.9 101.4L425.0 279.4M136.2 295.5L398.4 -45.1M118.5 98.0L427.6 276.0M139.3 297.3L401.5 -43.3M121.1 94.6L430.3 272.6M145.5 300.9L407.7 -39.7M126.4 87.8L435.5 265.8M148.6 302.7L410.8 -38.0M129.0 84.4L438.1 262.4M151.7 304.4L413.8 -36.2M131.6 81.0L440.7 259.0M154.8 306.2L416.9 -34.4M134.3 77.6L443.3 255.6M157.9 308.0L420.0 -32.6M136.9 74.2L445.9 252.1M161.0 309.8L423.1 -30.8M139.5 70.8L448.5 248.7M164.1 311.6L426.2 -29.1M142.2 67.4L451.1 245.3M167.2 313.3L429.2 -27.3M144.8 63.9L453.8 241.9M170.3 315.1L432.3 -25.5M147.4 60.5L456.4 238.5M176.5 318.7L438.5 -21.9M152.7 53.7L461.6 231.7M179.6 320.5L441.6 -20.2M155.3 50.3L464.2 228.3M182.7 322.2L444.6 -18.4M157.9 46.9L466.8 224.9M185.8 324.0L447.7 -16.6M160.6 43.5L469.4 221.5M188.9 325.8L450.8 -14.8M163.2 40.1L472.0 218.1M192.0 327.6L453.9 -13.0M165.8 36.7L474.6 214.7M195.1 329.4L457.0 -11.3M168.5 33.3L477.2 211.3M198.2 331.1L460.0 -9.5M171.1 29.9L479.8 207.9M201.3 332.9L463.1 -7.7M173.7 26.5L482.5 204.5M207.5 336.5L469.3 -4.1M179.0 19.7L487.7 197.7M210.6 338.3L472.3 -2.4M181.6 16.3L490.3 194.3M213.7 340.0L475.4 -0.6M184.2 12.9L492.9 190.9M216.8 341.8L478.5 1.2M186.9 9.5L495.5 187.5M219.9 343.6L481.6 3.0M189.5 6.1L498.1 184.1M223.0 345.4L484.7 4.8M192.1 2.7L500.7 180.7M226.1 347.1L487.7 6.5M194.7 -0.7L503.3 177.3M229.2 348.9L490.8 8.3M197.4 -4.1L505.9 173.9M232.3 350.7L493.9 10.1M200.0 -7.5L508.5 170.5M238.5 354.3L500.0 13.6M205.2 -14.3L513.7 163.7M241.6 356.0L503.1 15.4M207.9 -17.7L516.3 160.3M244.7 357.8L506.2 17.2M210.5 -21.1L518.9 156.9M247.8 359.6L509.3 19.0M213.1 -24.5L521.5 153.5M250.9 361.4L512.3 20.8M215.7 -27.9L524.2 150.1M254.0 363.1L515.4 22.5M218.3 -31.3L526.8 146.7M257.1 364.9L518.5 24.3M221.0 -34.7L529.4 143.3M260.1 366.7L521.6 26.1M223.6 -38.1L532.0 139.9M263.2 368.5L524.6 27.9M226.2 -41.5L534.6 136.5M269.4 372.0L530.8 31.4M231.5 -48.3L539.8 129.7M272.5 373.8L533.9 33.2M234.1 -51.7L542.4 126.3M275.6 375.6L536.9 35.0M236.7 -55.1L545.0 122.9M278.7 377.4L540.0 36.8M239.3 -58.5L547.6 119.5M281.8 379.1L543.1 38.5M242.0 -61.9L550.2 116.1M284.9 380.9L546.2 40.3M244.6 -65.3L552.8 112.7M288.0 382.7L549.2 42.1M247.2 -68.7L555.4 109.3M291.1 384.5L552.3 43.9M249.8 -72.1L558.0 105.9M294.2 386.2L555.4 45.6M252.4 -75.5L560.6 102.5M300.4 389.8L561.5 49.2M257.7 -82.3L565.8 95.7M303.5 391.6L564.6 51.0M260.3 -85.7L568.4 92.3M306.6 393.3L567.7 52.7M262.9 -89.1L571.0 88.9M309.6 395.1L570.8 54.5M265.5 -92.5L573.6 85.5M312.7 396.9L573.8 56.3M268.2 -95.9L576.2 82.1M315.8 398.7L576.9 58.1M270.8 -99.2L578.8 78.7M318.9 400.5L580.0 59.9M273.4 -102.6L581.4 75.4M322.0 402.2L583.0 61.6M276.0 -106.0L584.0 72.0M325.1 404.0L586.1 63.4M278.6 -109.4L586.6 68.6" stroke="url(#gmin)" stroke-width=".6" fill="none"/>
<path d="M18.3 227.8L281.2 -112.8M18.3 227.8L328.2 405.8M49.4 245.7L312.1 -95.0M44.7 193.6L354.4 371.6M80.4 263.5L343.0 -77.2M71.1 159.5L380.6 337.4M111.4 281.3L373.8 -59.3M97.4 125.3L406.7 303.3M142.4 299.1L404.6 -41.5M123.8 91.2L432.9 269.2M173.4 316.9L435.4 -23.7M150.1 57.1L459.0 235.1M204.4 334.7L466.2 -5.9M176.3 23.1L485.1 201.1M235.4 352.5L497.0 11.9M202.6 -10.9L511.1 167.1M266.3 370.3L527.7 29.6M228.8 -44.9L537.2 133.1M297.3 388.0L558.5 47.4M255.1 -78.9L563.2 99.1M328.2 405.8L589.2 65.2M281.2 -112.8L589.2 65.2" stroke="url(#gmaj)" stroke-width=".8" fill="none"/></g>
<defs>
<linearGradient id="cylside" x1="0" y1="0" x2="1" y2="0"><stop offset="0" stop-color="#c01010"/><stop offset=".45" stop-color="#cf1212"/><stop offset=".8" stop-color="#9c0e0e"/><stop offset="1" stop-color="#6e0a0a"/></linearGradient>
</defs>
<g transform="translate(-215,-73)" fill="none" stroke="#131319" stroke-width="1.4" stroke-linejoin="round" stroke-linecap="round">
<!-- cube -->
<g id="cube">
<path d="M353.1 203.7L324.6 223.1L357.9 240.4L386.7 220.5Z"/>
<path d="M353.1 238.2L324.6 258L357.9 274.9L386.7 255.4Z"/>
<path d="M353.1 203.7V238.2M324.6 223.1V258M357.9 240.4V274.9M386.7 220.5V255.4"/>
</g>
<!-- slotted block -->
<g id="block">
<path d="M402.4 266.3H419.9M432.9 266.3H446V327.3H402.4V266.3"/>
<path d="M419.9 266.3V307.3H432.9V266.3M419.9 271.8H432.9"/>
<path d="M402.4 291.4H446M402.4 302.3H446"/>
</g>
<!-- small stepped part -->
<g id="steps" stroke-width="1.05">
<path d="M477.3 349.1L505.6 339.1L526.1 348.5V358.2"/>
<path d="M477.3 349.1L477.6 358.8L482.2 380.5L508 379.3V369.8"/>
<path d="M482.2 380.5V369.8L508 369.8" stroke-width="1.3"/>
<path d="M477.6 358.8L497.4 352.1L502 348.8"/>
<path d="M505.6 339.1V348.5M502 348.8L526.1 348.5M502 348.8V358.2H526.1M502 348.8L526.1 358.2M506.6 350.2L519 358.2"/>
<path d="M496.6 359.8H518.8V371.6M496.6 359.8V369.8L518.8 371.6M496.6 359.8L518.8 371.6M501.8 359.8L517.6 371"/>
<path d="M496.6 369.8L508 379.3M482.2 380.5L496.6 369.8" stroke-width=".9"/>
<path d="M488.4 354.2L490.2 352.1L495 352.8V363L493.2 365.5L488.4 364.9Z M490.2 352.1V362.6L488.4 364.9M490.2 362.6L495 363" stroke-width="1.15"/>
</g>
<!-- frustum -->
<g id="frustum" stroke-width="1.5" stroke="#0e0e13">
<path d="M579 97.6L486.4 150.7L579 203.8L672.2 150.7Z"/>
<path d="M579 132.7L437 213.9L579 296.6L720.8 213.9Z"/>
<path d="M578.8 97.6V132.7M578.8 203.8V296.6M486.4 150.7L437 213.9M672.2 150.7L720.8 213.9"/>
</g>
<!-- wire part behind cylinder -->
<g id="key0" stroke-width="1">
<path d="M526.1 188.5L534.9 184.6L541.8 194.1L539.2 201"/>
<path d="M534.9 184.6L533.4 194.4L541.8 194.1"/>
</g>
<!-- cylinder -->
<g id="cyl" stroke="#1e0606" stroke-width="1.2">
<path d="M491.7 226.5l6.6 8.2a26.1 20.7 -36.2 0 0 42.2 -30.8l-6.6 -8.2z" fill="url(#cylside)"/>
<path d="M528.7 225.8L535.3 232.2L544.8 231L537.2 223.4Z" fill="#8c0e0e"/>
<path d="M534.6 216.6L537.2 223.4L528.7 225.8Z" fill="#e01010"/>
<ellipse cx="512.8" cy="211.1" rx="26.1" ry="20.7" transform="rotate(-36.2 512.8 211.1)" fill="#dc0c0c"/>
<path d="M534.6 216.6L528.7 225.8L537.6 223.6Z" fill="#e01212" stroke="none"/>
<path d="M534.6 216.6L544.8 231" stroke="#1a0a0a" stroke-width="1.4"/>
<path d="M515.4 208.6a3.3 3.3 0 1 0 .3 4.6" stroke="#6a0808" stroke-width="1.1"/>
<circle cx="513.2" cy="211.4" r=".5" fill="#7a0a0a" stroke="none"/>
</g>
<path d="M544.8 231L566.6 242.3" stroke="#1b1b24" stroke-width=".8"/>
<!-- snap marker -->
<g id="snap" stroke="#12a07c" stroke-width="1.7" stroke-linecap="round">
<path d="M573.8 245.9H581.6M573.8 250.1H581.6M575.6 244.1V251.9M579.8 244.1V251.9"/>
</g>
<!-- cursor -->
<g id="cursor">
<path d="M566.6 238.1V246.5M562.4 242.3H570.8" stroke="#55555f" stroke-width="2.6" stroke-linecap="butt"/>
<path d="M566.6 238.4V246.2M562.7 242.3H570.5" stroke="#fff" stroke-width="1.3" stroke-linecap="butt"/>
</g>
<!-- axis cross -->
<g id="axis" stroke-width="1.1" stroke-linecap="butt">
<path d="M760.6 400V388.6" stroke="#1c1ca0"/><path d="M760.6 388.2l-1.1 3h2.2z" fill="#1c1ca0" stroke="none"/>
<path d="M760.6 400L768 396" stroke="#1f9a2c"/><path d="M768.4 395.8l-2.9 .5l1 1.9z" fill="#1f9a2c" stroke="none"/>
<path d="M760.6 400L770.4 405.4" stroke="#a01c1c"/><path d="M771 405.7l-2.1 -2.2l-1.1 2z" fill="#a01c1c" stroke="none"/>
</g>
</g>
<text x="553.9" y="322.9" font-family="Liberation Sans,sans-serif" font-size="6.3" fill="#26262c">Y</text>
<text x="556.9" y="333" font-family="Liberation Sans,sans-serif" font-size="6.3" fill="#26262c">X</text>

</svg></div>
<div id="rtb" class="abs"><svg style="left:7.5px;top:2px" width="7" height="4" viewBox="0 0 7 4"><path d="M1.2 .4V3.4M3.4 .4V3.4M5.6 .4V3.4" stroke="#c9c8c5" stroke-width=".9"/></svg>
<div class="rb on" style="top:7.2px"><svg width="14" height="14" viewBox="0 0 16 16" style="left:0px;top:-.2px"><path d="M5.2 7V5.2a2.8 2.8 0 0 1 5.6 0V7" fill="none" stroke="#0b6a52" stroke-width="1.7"/><rect x="3.6" y="6.8" width="8.8" height="6.4" rx=".8" fill="#12906f" stroke="#0b6a52" stroke-width=".6"/><rect x="4.6" y="7.6" width="2.2" height="4.8" fill="#5fc7a8" opacity=".7"/></svg></div>
<div class="rb on" style="top:24.3px"><svg width="14" height="14" viewBox="0 0 16 16" style="left:0px;top:-.2px"><path d="M3 12.6L13 3.4" stroke="#0b6a52" stroke-width="1.8" stroke-linecap="round"/><path d="M8 4.6L11 8L8 11.4L5 8Z" transform="rotate(45 8 8)" fill="#12906f" stroke="#0b6a52" stroke-width=".6"/></svg></div>
<div class="rb on" style="top:41.3px"><svg width="14" height="14" viewBox="0 0 16 16" style="left:0px;top:-.2px"><path d="M8 2.6V12M3 12.2H13" stroke="#12906f" stroke-width="2.6" stroke-linecap="butt"/></svg></div>
<div class="rb on" style="top:58.4px"><svg width="14" height="14" viewBox="0 0 16 16" style="left:0px;top:-.2px"><path d="M5.6 3.4V12.6M10.4 3.4V12.6M3.4 5.6H12.6M3.4 10.4H12.6" stroke="#12906f" stroke-width="3" stroke-linecap="round"/><rect x="6.9" y="6.9" width="2.2" height="2.2" fill="#f2f1f0"/></svg></div>
<div class="rb on" style="top:75.5px"><svg width="14" height="14" viewBox="0 0 16 16" style="left:0px;top:-.2px"><path d="M4 4L12 12M12 4L4 12" stroke="#12906f" stroke-width="2.9" stroke-linecap="round"/></svg></div>
<div class="rb on" style="top:92.5px"><svg width="14" height="14" viewBox="0 0 16 16" style="left:0px;top:-.2px"><path d="M4.6 5L12.8 9.6M3.2 8.4L11.4 13" stroke="#12906f" stroke-width="2.4" stroke-linecap="butt"/></svg></div>
<div class="rb on" style="top:109.6px"><svg width="14" height="14" viewBox="0 0 16 16" style="left:0px;top:-.2px"><path d="M5 11L12.6 4" stroke="#0e7a5e" stroke-width="2.4" stroke-linecap="round"/><circle cx="4.8" cy="11.2" r="2.2" fill="#12906f" stroke="#0b6a52" stroke-width=".6"/></svg></div>
<div class="rb on" style="top:126.7px"><svg width="14" height="14" viewBox="0 0 16 16" style="left:0px;top:-.2px"><circle cx="8" cy="4.6" r="1.9" fill="#12906f"/><circle cx="8" cy="11.4" r="1.9" fill="#12906f"/><circle cx="4.6" cy="8" r="1.9" fill="#12906f"/><circle cx="11.4" cy="8" r="1.9" fill="#12906f"/><path d="M8 4.6L11.4 8L8 11.4L4.6 8Z" fill="none" stroke="#12906f" stroke-width="1.6"/><circle cx="8" cy="8" r="1.3" fill="#f4f4f3"/></svg></div>
<div class="rb on" style="top:143.8px"><svg width="14" height="14" viewBox="0 0 16 16" style="left:0px;top:-.2px"><circle cx="8" cy="8" r="4.6" fill="none" stroke="#12906f" stroke-width="2.6"/><circle cx="8" cy="8" r="1.6" fill="none" stroke="#12906f" stroke-width="1"/></svg></div>
<div class="rb on" style="top:160.8px"><svg width="14" height="14" viewBox="0 0 16 16" style="left:0px;top:-.2px"><circle cx="4.4" cy="8" r="1.6" fill="#12906f"/><circle cx="8" cy="8" r="1.6" fill="#12906f"/><circle cx="11.6" cy="8" r="1.6" fill="#12906f"/></svg></div>
<div class="rb on" style="top:177.9px"><svg width="14" height="14" viewBox="0 0 16 16" style="left:0px;top:-.2px"><path d="M4 7.6L11 12" stroke="#12906f" stroke-width="2.2" stroke-linecap="butt"/><circle cx="10.4" cy="5" r="1.6" fill="#12906f"/></svg></div>
<div class="rb on" style="top:195.0px"><svg width="14" height="14" viewBox="0 0 16 16" style="left:0px;top:-.2px"><path d="M8 4.2V11.8M4.2 8H11.8" stroke="#12906f" stroke-width="2.2" stroke-linecap="butt"/></svg></div>
<div class="rb on" style="top:212.0px"><svg width="14" height="14" viewBox="0 0 16 16" style="left:0px;top:-.2px"><path d="M5.4 4.4H10.8M4.4 6.2V11.4M5.4 11.4H8.4M10.6 4.4V7.4" stroke="#12906f" stroke-width="1.8"/><path d="M8 3.4H11.4" stroke="#0b6a52" stroke-width="1"/></svg></div>
<div class="rb on" style="top:229.1px"><svg width="14" height="14" viewBox="0 0 16 16" style="left:0px;top:-.2px"><rect x="3.2" y="3" width="9.6" height="10" rx=".8" fill="#14a37e" stroke="#0b6a52" stroke-width=".9"/><circle cx="7" cy="9" r="1.2" fill="none" stroke="#0b6a52" stroke-width=".6"/></svg></div></div>
<div id="btab" class="abs"><div style="left:0px;top:0px;width:140px;height:22px;background:linear-gradient(#fdfdfd,#f6f6f5);border:1px solid #cfcdca;border-top:none;border-radius:0 0 3px 3px">
<svg style="left:4px;top:5.5px" width="10" height="9" viewBox="0 0 10 9"><path d="M.6 .6H5.4V2.4H2.6V3.8H4.6V5.4H2.6V8.4H.6Z" fill="#e03a1e"/><circle cx="6.2" cy="5.4" r="2.9" fill="#1c3f9c"/><path d="M6.2 1.8V9M2.6 5.4H9.8M3.7 2.9L8.7 7.9M8.7 2.9L3.7 7.9" stroke="#1c3f9c" stroke-width="1.1"/><circle cx="6.2" cy="5.4" r="1.2" fill="#f4f4f4"/></svg>
<span style="left:19.4px;top:6.2px;font-size:9.5px;color:#3c3c3c;white-space:pre">F2-T16-ejemplo-ini : 1*</span>
<svg style="left:124px;top:6.4px" width="8.4" height="8.4" viewBox="0 0 8 8"><path d="M1.3 1.3L6.7 6.7M6.7 1.3L1.3 6.7" stroke="#5e5e5e" stroke-width="2.4" stroke-linecap="butt"/></svg>
</div>
</div>
<div id="status" class="abs"><span style="right:15.6px;top:5px;font-size:9.5px;color:#444;white-space:pre">128.63 x 78.77 mm</span></div>
</div>
</body>
</html>
